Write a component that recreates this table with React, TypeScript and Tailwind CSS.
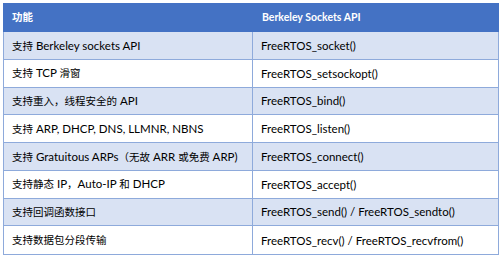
import React from "react";

const rows: [string, string][] = [
  ["支持 Berkeley sockets API", "FreeRTOS_socket()"],
  ["支持 TCP 滑窗", "FreeRTOS_setsockopt()"],
  ["支持重入，线程安全的 API", "FreeRTOS_bind()"],
  ["支持 ARP, DHCP, DNS, LLMNR, NBNS", "FreeRTOS_listen()"],
  ["支持 Gratuitous ARPs（无故 ARR 或免费 ARP)", "FreeRTOS_connect()"],
  ["支持静态 IP，Auto-IP 和 DHCP", "FreeRTOS_accept()"],
  ["支持回调函数接口", "FreeRTOS_send() / FreeRTOS_sendto()"],
  ["支持数据包分段传输", "FreeRTOS_recv() / FreeRTOS_recvfrom()"],
];

function Mixed({ text }: { text: string }) {
  const parts = text.split(/([\u3000-\u9fff\uff00-\uffef]+)/).filter((p) => p.length > 0);
  return (
    <>
      {parts.map((p, i) =>
        /[\u3000-\u9fff\uff00-\uffef]/.test(p) ? (
          <span key={i} className="text-[10.5px]">
            {p}
          </span>
        ) : (
          <span key={i}>{p}</span>
        )
      )}
    </>
  );
}

export default function App() {
  return (
    <div
      className="w-[502px] h-[257px] bg-white pt-[3px] pl-[3px]"
      style={{ fontFamily: 'Lato, "Noto Sans CJK SC", sans-serif' }}
    >
      <div className="w-[496px] flex flex-col">
        <div className="flex h-[29px] bg-[#4472C4] text-white font-bold items-center">
          <div className="w-[250px] pl-[9px] text-[10.5px]">功能</div>
          <div className="w-[246px] pl-[9px] text-[10.5px]">Berkeley Sockets API</div>
        </div>
        <div className="border-l border-r border-b border-[#8EAADB]">
          {rows.map(([a, b], i) => (
            <div
              key={i}
              className={`flex h-[27.75px] items-center text-[11.5px] text-black ${
                i % 2 === 0 ? "bg-[#D9E2F3]" : "bg-white"
              } ${i < rows.length - 1 ? "border-b border-[#8EAADB]" : ""}`}
            >
              <div className="w-[249px] h-full flex items-center pl-[8px] border-r border-[#8EAADB] whitespace-nowrap">
                <span>
                  <Mixed text={a} />
                </span>
              </div>
              <div className="flex-1 h-full flex items-center pl-[8px] whitespace-nowrap">{b}</div>
            </div>
          ))}
        </div>
      </div>
    </div>
  );
}
